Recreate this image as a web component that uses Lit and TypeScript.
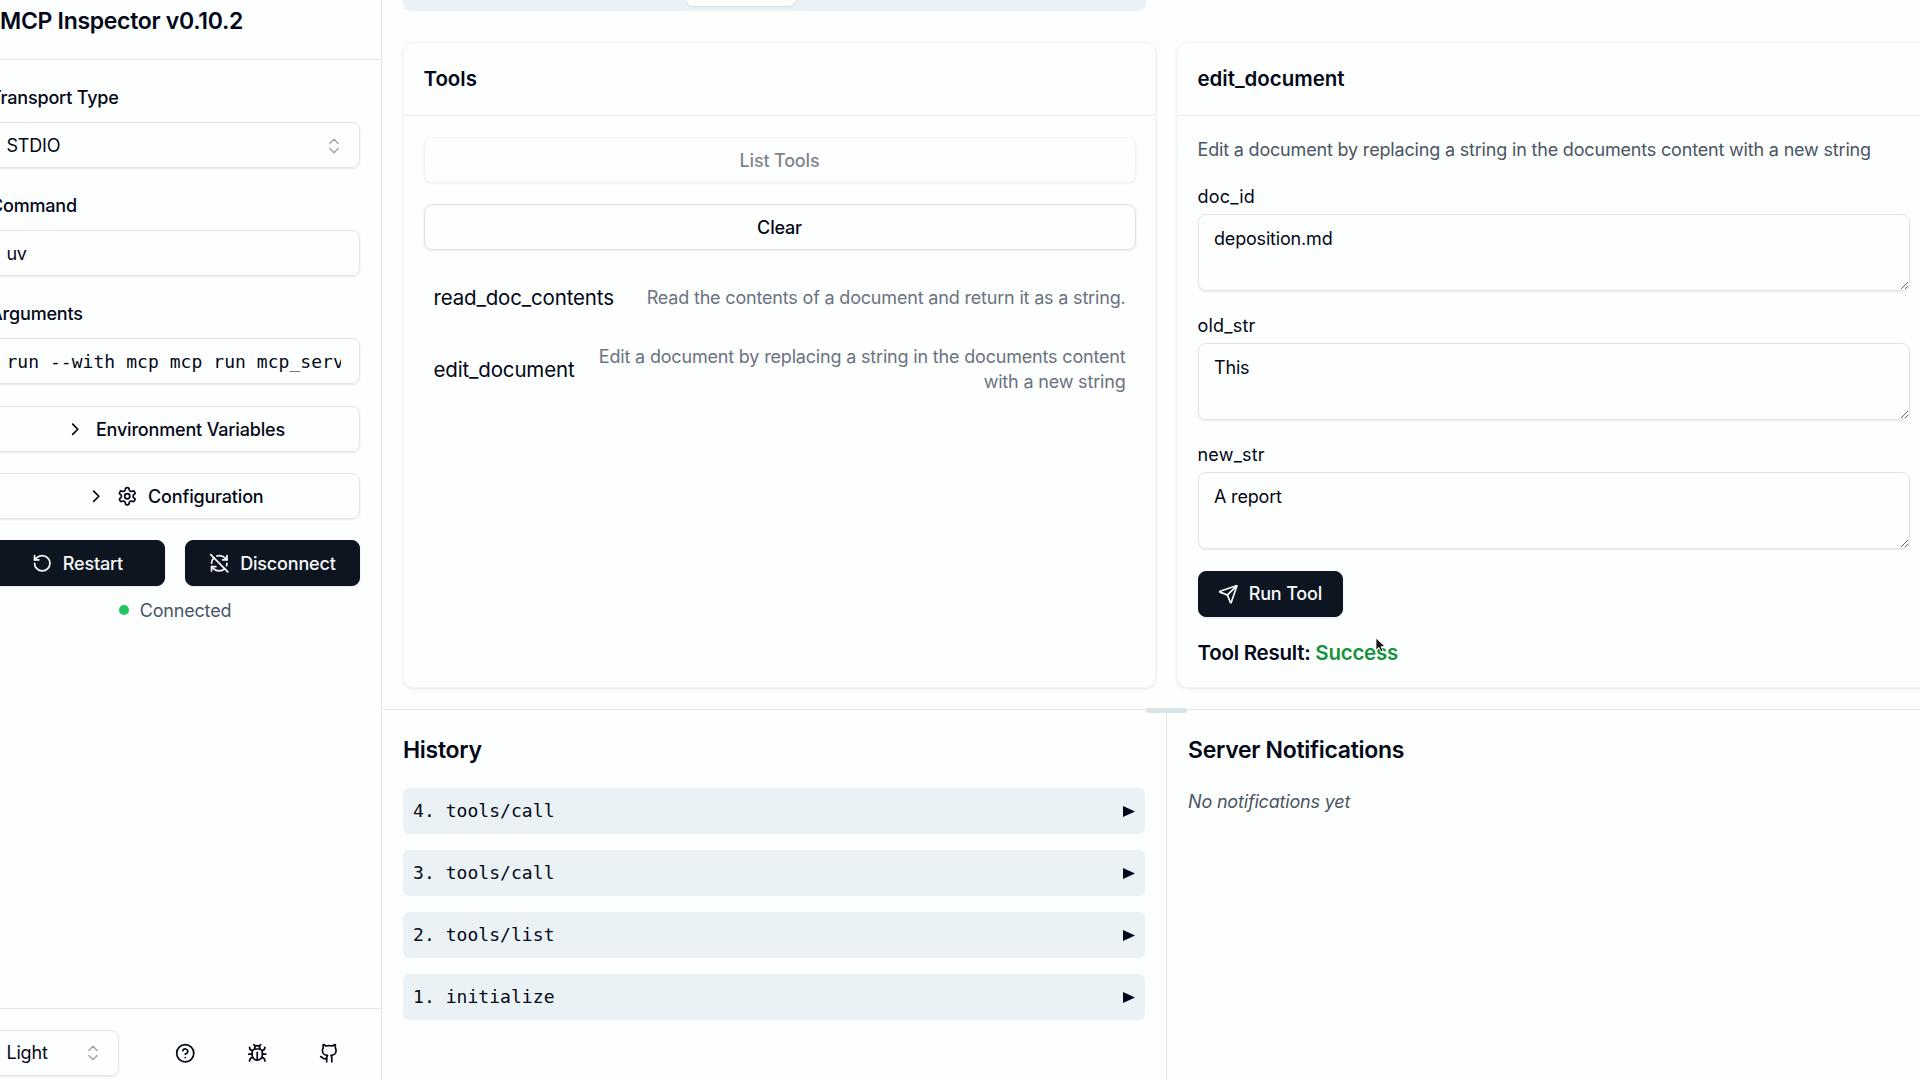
import { LitElement, html, css, svg } from "lit";
import { customElement } from "lit/decorators.js";

const ICONS: Record<string, string[]> = {
  updown: ["m7 15 5 5 5-5", "m7 9 5-5 5 5"],
  chevron: ["m9 18 6-6-6-6"],
  gear: [
    "M12.22 2h-.44a2 2 0 0 0-2 2v.18a2 2 0 0 1-1 1.73l-.43.25a2 2 0 0 1-2 0l-.15-.08a2 2 0 0 0-2.73.73l-.22.38a2 2 0 0 0 .73 2.73l.15.1a2 2 0 0 1 1 1.72v.51a2 2 0 0 1-1 1.74l-.15.09a2 2 0 0 0-.73 2.73l.22.38a2 2 0 0 0 2.73.73l.15-.08a2 2 0 0 1 2 0l.43.25a2 2 0 0 1 1 1.73V20a2 2 0 0 0 2 2h.44a2 2 0 0 0 2-2v-.18a2 2 0 0 1 1-1.73l.43-.25a2 2 0 0 1 2 0l.15.08a2 2 0 0 0 2.73-.73l.22-.39a2 2 0 0 0-.73-2.73l-.15-.08a2 2 0 0 1-1-1.74v-.5a2 2 0 0 1 1-1.74l.15-.09a2 2 0 0 0 .73-2.73l-.22-.38a2 2 0 0 0-2.73-.73l-.15.08a2 2 0 0 1-2 0l-.43-.25a2 2 0 0 1-1-1.73V4a2 2 0 0 0-2-2z",
    "M9 12a3 3 0 1 0 6 0a3 3 0 1 0-6 0",
  ],
  restart: ["M3 12a9 9 0 1 0 9-9 9.75 9.75 0 0 0-6.74 2.74L3 8", "M3 3v5h5"],
  disconnect: [
    "M21 8L18.74 5.74A9.75 9.75 0 0 0 12 3C11 3 10.03 3.16 9.13 3.47",
    "M8 16H3v5",
    "M3 12C3 9.51 4 7.26 5.64 5.64",
    "m3 16 2.26 2.26A9.75 9.75 0 0 0 12 21c2.49 0 4.74-1 6.36-2.64",
    "M21 12c0 1-.16 1.97-.47 2.87",
    "M21 3v5h-5",
    "M22 22 2 2",
  ],
  send: [
    "M14.536 21.686a.5.5 0 0 0 .937-.024l6.5-19a.496.496 0 0 0-.635-.635l-19 6.5a.5.5 0 0 0-.024.937l7.93 3.18a2 2 0 0 1 1.112 1.11z",
    "m21.854 2.147-10.94 10.939",
  ],
  help: ["M2 12a10 10 0 1 0 20 0a10 10 0 1 0-20 0", "M9.09 9a3 3 0 0 1 5.83 1c0 2-3 3-3 3", "M12 17h.01"],
  bug: [
    "m8 2 1.88 1.88",
    "M14.12 3.88 16 2",
    "M9 7.13v-1a3.003 3.003 0 1 1 6 0v1",
    "M12 20c-3.3 0-6-2.7-6-6v-3a4 4 0 0 1 4-4h4a4 4 0 0 1 4 4v3c0 3.3-2.7 6-6 6",
    "M12 20v-9",
    "M6.53 9C4.6 8.8 3 7.1 3 5",
    "M6 13H2",
    "M3 21c0-2.1 1.7-3.9 3.8-4",
    "M20.97 5c0 2.1-1.6 3.8-3.5 4",
    "M22 13h-4",
    "M17.2 17c2.1.1 3.8 1.9 3.8 4",
  ],
  github: [
    "M15 22v-4a4.8 4.8 0 0 0-1-3.5c3 0 6-2 6-5.5.08-1.25-.27-2.48-1-3.5.28-1.15.28-2.35 0-3.5 0 0-1 0-3 1.5-2.64-.5-5.36-.5-8 0C6 2 5 2 5 2c-.3 1.15-.3 2.35 0 3.5A5.403 5.403 0 0 0 4 9c0 3.5 3 5.5 6 5.5-.39.49-.68 1.05-.85 1.65-.17.6-.22 1.23-.15 1.85v4",
    "M9 18c-4.51 2-5-2-7-2",
  ],
};

const icon = (name: string, cls = "") => html`<svg class="icon ${cls}" viewBox="0 0 24 24" fill="none" stroke="currentColor" stroke-width="2" stroke-linecap="round" stroke-linejoin="round">${ICONS[name].map((d) => svg`<path d=${d}></path>`)}</svg>`;

@customElement("app-root")
export class AppRoot extends LitElement {
  static styles = css`
    :host { display: block; width: 1920px; height: 1080px; overflow: hidden; }
    * { box-sizing: border-box; }
    .root { display: flex; width: 1920px; height: 1080px; overflow: hidden; position: relative; background: #fdfefe; color: #020817;
      font-family: Inter, "Liberation Sans", sans-serif; font-size: 18px; line-height: 25.7px; letter-spacing: -0.18px; }
    .icon { width: 20.5px; height: 20.5px; flex: none; }
    .mono { font-family: "DejaVu Sans Mono", "Liberation Mono", monospace; letter-spacing: 0.05px; }

    .sidebar { flex: 0 0 413px; margin-left: -31px; border-right: 1px solid #e1e9ef; display: flex; flex-direction: column; }
    .side-head { height: 60px; flex: none; padding: 8px 0 0 31px; border-bottom: 1px solid #e1e9ef; }
    .title { font-size: 23px; font-weight: 600; line-height: 26px; white-space: nowrap; letter-spacing: -0.3px; }
    .side-body { flex: 1; padding: 25px 21px 0; display: flex; flex-direction: column; }
    .field { display: flex; flex-direction: column; gap: 11px; margin-bottom: 25px; }
    .label { font-weight: 500; height: 26px; }
    .control { height: 46px; border: 1px solid #dfe8ee; border-radius: 8px; box-shadow: 0 1px 2px rgba(50,90,120,.12); background: transparent; width: 100%;
      font: inherit; letter-spacing: inherit; color: inherit; padding: 1px 15.4px 0; outline: none; display: block; }
    .mono.control { font-family: "DejaVu Sans Mono", "Liberation Mono", monospace; padding-right: 18px; letter-spacing: 0.05px; }
    .select { display: flex; align-items: center; justify-content: space-between; padding-right: 15px; }
    .updown { color: #9aa1ab; width: 20px; height: 20px; stroke-width: 1.6; }
    .btn { height: 46px; padding-top: 1px; border: 1px solid #dfe8ee; border-radius: 8px; box-shadow: 0 1px 2px rgba(50,90,120,.12); display: flex; align-items: center; justify-content: center; gap: 10.3px; font-weight: 500; }
    .side-btn { margin-bottom: 21px; }
    .field.last { margin-bottom: 22px; }
    .actions { display: grid; grid-template-columns: 175px 175px; gap: 20px; }
    .dark { background: #0d1520; border-color: #0d1520; color: #f8fafc; }
    .status { display: flex; align-items: center; justify-content: center; gap: 11px; margin-top: 11.5px; color: #475569; }
    .dot { width: 10px; height: 10px; border-radius: 50%; background: #22c55e; }
    .side-foot { height: 72px; flex: none; border-top: 1px solid #e1e9ef; padding: 21px 21px 0; display: flex; align-items: flex-start; }
    .theme { width: 129px; flex: none; margin-right: 43px; padding-top: 0; }
    .foot-icons { display: flex; gap: 26px; }
    .foot-btn { width: 46px; height: 46px; display: flex; align-items: center; justify-content: center; }

    .main { flex: none; width: 1569px; position: relative; display: flex; flex-direction: column; }
    .top { height: 710px; flex: none; border-bottom: 1px solid #e1e9ef; padding: 0 21px; }
    .tabs { width: 743px; height: 11px; background: #ebf2f5; border-radius: 0 0 8px 8px; }
    .tab { width: 108px; height: 6px; margin-left: 284px; background: #fdfefe; border-radius: 0 0 6px 6px; box-shadow: 0 1px 2px rgba(0,0,0,.1); }
    .cards { margin-top: 31px; display: grid; grid-template-columns: 753px 753px; gap: 21px; height: 646px; }
    .card { border: 1px solid #f3f5f6; border-radius: 10px; box-shadow: 0 1px 3px rgba(0,0,0,.1); background: #fdfefe; display: flex; flex-direction: column; }
    .card-head { height: 73px; flex: none; display: flex; align-items: center; padding: 0 19.5px; border-bottom: 1px solid #e8ecef; font-size: 20.5px; font-weight: 600; letter-spacing: -0.02px; }
    .card-body { padding: 21px 19.5px; flex: 1; display: flex; flex-direction: column; }
    .disabled { opacity: .5; }
    .clear { border-color: #d6e3e9; margin-top: 21px; }
    .list { margin-top: 21px; display: flex; flex-direction: column; gap: 5px; }
    .tool { display: flex; align-items: center; justify-content: space-between; gap: 21px; padding: 14px 10px; }
    .tool-name { font-size: 20.5px; white-space: nowrap; letter-spacing: -0.15px; }
    .tool-desc { color: #6b7280; text-align: right; }
    .edit-desc { color: #4b5563; margin-bottom: 21px; }
    .arg { display: flex; flex-direction: column; gap: 5px; margin-bottom: 21.8px; }
    .arg-label { letter-spacing: 0.2px; }
    textarea { height: 76.5px; width: 100%; display: block; border: 1px solid #dbe6ec; border-radius: 8px; box-shadow: 0 1px 2px rgba(50,90,120,.12); background: transparent; font: inherit; letter-spacing: inherit; color: inherit; padding: 11px 15.5px; outline: none; }
    .run { width: 145px; gap: 10.3px; }
    .result { margin-top: 23.5px; font-size: 20.5px; font-weight: 600; letter-spacing: -0.25px; }
    .success { color: #15943f; }

    .bottom { flex: 1; display: grid; grid-template-columns: 785px 1fr; }
    .pane { padding: 22px 21px 21px; }
    .pane.hist { border-right: 1px solid #e1e9ef; }
    .pane-title { font-size: 23px; font-weight: 600; line-height: 36px; margin-bottom: 20px; letter-spacing: -0.3px; }
    .rows { display: flex; flex-direction: column; gap: 16px; }
    .row { height: 46px; border-radius: 6px; background: #ebf2f5; padding: 0 10px; display: flex; align-items: center; justify-content: space-between; white-space: pre; }
    .tri { width: 12px; height: 11px; flex: none; fill: #020817; }
    .empty { font-style: italic; color: #4b5563; padding-top: 0.5px; }
    .handle { position: absolute; left: 764px; top: 708px; width: 41px; height: 5px; border-radius: 3px; background: #d9e4ea; }
    .cursor { position: absolute; left: 1375px; top: 637px; width: 11px; height: 16px; }
  `;

  render() {
    return html`<div class="root">
      <aside class="sidebar">
        <div class="side-head"><div class="title">MCP Inspector v0.10.2</div></div>
        <div class="side-body">
          <div class="field"><div class="label">Transport Type</div><div class="control select"><span>STDIO</span>${icon("updown", "updown")}</div></div>
          <div class="field"><div class="label">Command</div><input class="control" readonly .value=${"uv"} /></div>
          <div class="field last"><div class="label">Arguments</div><input class="control mono" readonly .value=${"run --with mcp mcp run mcp_server.py"} /></div>
          <div class="btn side-btn">${icon("chevron")}<span>Environment Variables</span></div>
          <div class="btn side-btn">${icon("chevron")}${icon("gear")}<span>Configuration</span></div>
          <div class="actions">
            <div class="btn dark">${icon("restart")}<span>Restart</span></div>
            <div class="btn dark">${icon("disconnect")}<span>Disconnect</span></div>
          </div>
          <div class="status"><span class="dot"></span><span>Connected</span></div>
        </div>
        <div class="side-foot">
          <div class="control select theme"><span>Light</span>${icon("updown", "updown")}</div>
          <div class="foot-icons">
            <div class="foot-btn">${icon("help")}</div>
            <div class="foot-btn">${icon("bug")}</div>
            <div class="foot-btn">${icon("github")}</div>
          </div>
        </div>
      </aside>
      <main class="main">
        <section class="top">
          <div class="tabs"><div class="tab"></div></div>
          <div class="cards">
            <div class="card">
              <div class="card-head">Tools</div>
              <div class="card-body">
                <div class="btn disabled">List Tools</div>
                <div class="btn clear">Clear</div>
                <div class="list">
                  <div class="tool"><span class="tool-name">read_doc_contents</span><span class="tool-desc">Read the contents of a document and return it as a string.</span></div>
                  <div class="tool"><span class="tool-name">edit_document</span><span class="tool-desc">Edit a document by replacing a string in the documents content with a new string</span></div>
                </div>
              </div>
            </div>
            <div class="card">
              <div class="card-head">edit_document</div>
              <div class="card-body">
                <div class="edit-desc">Edit a document by replacing a string in the documents content with a new string</div>
                <div class="arg"><div class="arg-label">doc_id</div><textarea readonly .value=${"deposition.md"}></textarea></div>
                <div class="arg"><div class="arg-label">old_str</div><textarea readonly .value=${"This"}></textarea></div>
                <div class="arg"><div class="arg-label">new_str</div><textarea readonly .value=${"A report"}></textarea></div>
                <div class="btn dark run">${icon("send")}<span>Run Tool</span></div>
                <div class="result">Tool Result: <span class="success">Success</span></div>
              </div>
            </div>
          </div>
        </section>
        <section class="bottom">
          <div class="pane hist">
            <div class="pane-title">History</div>
            <div class="rows mono">
              ${["4. tools/call", "3. tools/call", "2. tools/list", "1. initialize"].map((t) => html`<div class="row"><span>${t}</span><svg class="tri" viewBox="0 0 12 11"><path d="M0 0 12 5.5 0 11z"></path></svg></div>`)}
            </div>
          </div>
          <div class="pane">
            <div class="pane-title">Server Notifications</div>
            <div class="empty">No notifications yet</div>
          </div>
        </section>
        <div class="handle"></div>
      </main>
      <svg class="cursor" viewBox="0 0 11 16"><path d="M1 1v12l3-2.6 2 4.4 2-.9-2-4.3h4z" fill="#111" stroke="#fff" stroke-width=".8"></path></svg>
    </div>`;
  }
}
